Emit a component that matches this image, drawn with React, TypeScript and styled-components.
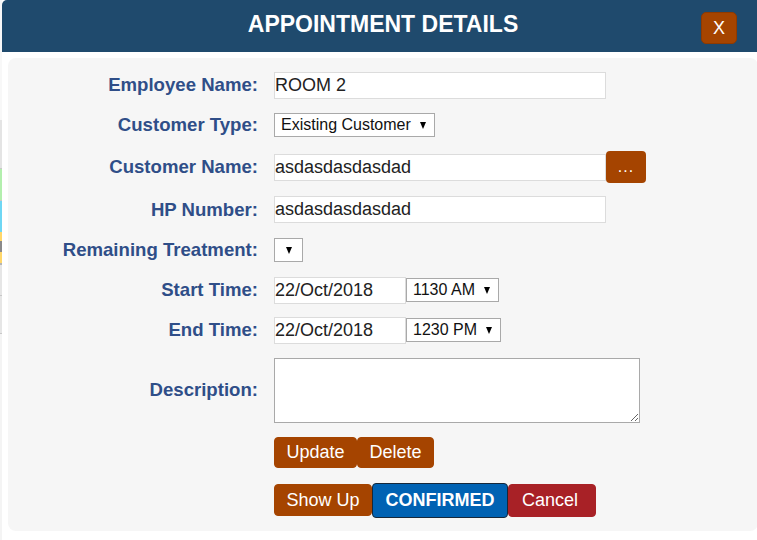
import styled, { createGlobalStyle } from "styled-components";

const GlobalStyle = createGlobalStyle`
  html, body {
    margin: 0;
    padding: 0;
    background: #ffffff;
  }
  body {
    font-family: "Liberation Sans", Arial, sans-serif;
  }
`;

const BROWN = "#a54400";
const BLUE = "#0062b3";
const RED = "#a82126";
const LABEL = "#2f4e88";

const Page = styled.div`
  width: 757px;
  height: 540px;
  display: flex;
  overflow: hidden;
  background: #ffffff;
`;

// the page behind the dialog, only a sliver of it shows on the left
const BackdropEdge = styled.div`
  width: 2px;
  flex: none;
  display: flex;
  flex-direction: column;
  background: #f4f4f4;
`;

const EdgeBand = styled.div<{ $color: string; $h: number }>`
  height: ${(p) => p.$h}px;
  background: ${(p) => p.$color};
  flex: none;
`;

const Modal = styled.div`
  width: 762px;
  flex: none;
  display: flex;
  flex-direction: column;
  background: #ffffff;
`;

const Header = styled.header`
  height: 52px;
  background: #1f4a6d;
  border-top-left-radius: 5px;
  display: grid;
  grid-template-columns: 1fr auto 1fr;
  align-items: center;
`;

const Title = styled.h1`
  grid-column: 2;
  margin: 0;
  color: #ffffff;
  font-size: 23px;
  font-weight: 700;
  line-height: 1;
  padding-bottom: 3px;
`;

const CloseButton = styled.button`
  grid-column: 3;
  justify-self: end;
  align-self: start;
  margin: 12px 27px 0 0;
  width: 36px;
  height: 32px;
  padding: 0;
  border: 1px solid #8f3a00;
  border-radius: 5px;
  background: ${BROWN};
  color: #ffffff;
  font-family: "Liberation Sans", Arial, sans-serif;
  font-size: 18px;
  line-height: 1;
`;

const Body = styled.div`
  margin: 6px 6px 0 6px;
  padding: 7px 0 5px;
  background: #f6f6f6;
  border-radius: 8px;
  display: flex;
  flex-direction: column;
`;

const Row = styled.div<{ $h: number }>`
  height: ${(p) => p.$h}px;
  display: grid;
  grid-template-columns: 250px 1fr;
  column-gap: 16px;
  align-items: center;
`;

const Label = styled.label`
  text-align: right;
  color: ${LABEL};
  font-size: 18.6px;
  font-weight: 700;
  white-space: nowrap;
`;

const Field = styled.div`
  display: flex;
  align-items: center;
`;

const TextInput = styled.input<{ $w: number }>`
  box-sizing: border-box;
  width: ${(p) => p.$w}px;
  height: 27px;
  margin: 0;
  padding: 0;
  border: 1px solid #dcdcdc;
  background: #ffffff;
  color: #222222;
  font-family: "Liberation Sans", Arial, sans-serif;
  font-size: 18px;
  outline: none;
`;

const SelectBox = styled.div<{ $empty?: boolean }>`
  box-sizing: border-box;
  height: 24px;
  display: inline-flex;
  align-items: center;
  gap: 9px;
  padding: ${(p) => (p.$empty ? "0 10px 0 11px" : "0 8px 0 6px")};
  border: 1px solid #a9a9a9;
  background: #ffffff;
  color: #111111;
  font-size: 16px;
  white-space: nowrap;
`;

const Caret = styled.span`
  width: 0;
  height: 0;
  border-left: 3.5px solid transparent;
  border-right: 3.5px solid transparent;
  border-top: 7px solid #000000;
  margin-top: 1px;
`;

const DotsButton = styled.button`
  width: 40px;
  height: 32px;
  padding: 0;
  border: none;
  border-radius: 4px;
  background: ${BROWN};
  color: #ffffff;
  font-family: "Liberation Sans", Arial, sans-serif;
  font-size: 16px;
  letter-spacing: 1px;
`;

const TextArea = styled.textarea`
  box-sizing: border-box;
  width: 366px;
  height: 65px;
  margin: 0;
  border: 1px solid #a9a9a9;
  background: #ffffff;
  font-family: "Liberation Sans", Arial, sans-serif;
  font-size: 16px;
  outline: none;
`;

const ButtonRow = styled.div`
  display: flex;
  align-items: center;
`;

const variants = {
  brown: { bg: BROWN, border: BROWN, weight: 400, pad: "0 11.5px" },
  blue: { bg: BLUE, border: "#16283a", weight: 700, pad: "0 12.5px" },
  red: { bg: RED, border: RED, weight: 400, pad: "0 17px 0 13px" },
};

const ActionButton = styled.button<{ $variant: keyof typeof variants; $h: number }>`
  height: ${(p) => p.$h}px;
  padding: ${(p) => variants[p.$variant].pad};
  margin: 0;
  border: 1px solid ${(p) => variants[p.$variant].border};
  border-radius: 4px;
  background: ${(p) => variants[p.$variant].bg};
  color: #ffffff;
  font-family: "Liberation Sans", Arial, sans-serif;
  font-size: 18px;
  font-weight: ${(p) => variants[p.$variant].weight};
  line-height: 1;
`;

const edgeBands = [
  { color: "#f8f8f8", h: 120 },
  { color: "#e4e4e4", h: 48 },
  { color: "#c8c8c8", h: 1 },
  { color: "#b3efae", h: 31 },
  { color: "#c8c8c8", h: 1 },
  { color: "#6fd7f4", h: 31 },
  { color: "#ffd76b", h: 9 },
  { color: "#8a8a8a", h: 11 },
  { color: "#ffd76b", h: 11 },
  { color: "#b5b5b5", h: 2 },
  { color: "#e6e6e6", h: 30 },
  { color: "#c8c8c8", h: 1 },
  { color: "#e6e6e6", h: 37 },
  { color: "#c8c8c8", h: 1 },
];

const App = () => {
  return (
    <>
      <GlobalStyle />
      <Page>
        <BackdropEdge>
          {edgeBands.map((b, i) => (
            <EdgeBand key={i} $color={b.color} $h={b.h} />
          ))}
        </BackdropEdge>
        <Modal>
          <Header>
            <Title>APPOINTMENT DETAILS</Title>
            <CloseButton>X</CloseButton>
          </Header>
          <Body>
            <Row $h={40}>
              <Label>Employee Name:</Label>
              <Field>
                <TextInput $w={332} readOnly value="ROOM 2" />
              </Field>
            </Row>
            <Row $h={40}>
              <Label>Customer Type:</Label>
              <Field>
                <SelectBox>
                  Existing Customer
                  <Caret />
                </SelectBox>
              </Field>
            </Row>
            <Row $h={44}>
              <Label>Customer Name:</Label>
              <Field>
                <TextInput $w={332} readOnly value="asdasdasdasdad" />
                <DotsButton>...</DotsButton>
              </Field>
            </Row>
            <Row $h={41}>
              <Label>HP Number:</Label>
              <Field>
                <TextInput $w={332} readOnly value="asdasdasdasdad" />
              </Field>
            </Row>
            <Row $h={40}>
              <Label>Remaining Treatment:</Label>
              <Field>
                <SelectBox $empty>
                  <Caret />
                </SelectBox>
              </Field>
            </Row>
            <Row $h={40}>
              <Label>Start Time:</Label>
              <Field>
                <TextInput $w={132} readOnly value="22/Oct/2018" />
                <SelectBox>
                  1130 AM
                  <Caret />
                </SelectBox>
              </Field>
            </Row>
            <Row $h={40}>
              <Label>End Time:</Label>
              <Field>
                <TextInput $w={132} readOnly value="22/Oct/2018" />
                <SelectBox>
                  1230 PM
                  <Caret />
                </SelectBox>
              </Field>
            </Row>
            <Row $h={80}>
              <Label>Description:</Label>
              <Field>
                <TextArea />
              </Field>
            </Row>
            <Row $h={44}>
              <span />
              <ButtonRow>
                <ActionButton $variant="brown" $h={31}>Update</ActionButton>
                <ActionButton $variant="brown" $h={31}>Delete</ActionButton>
              </ButtonRow>
            </Row>
            <Row $h={52}>
              <span />
              <ButtonRow>
                <ActionButton $variant="brown" $h={32}>Show Up</ActionButton>
                <ActionButton $variant="blue" $h={35}>CONFIRMED</ActionButton>
                <ActionButton $variant="red" $h={33}>Cancel</ActionButton>
              </ButtonRow>
            </Row>
          </Body>
        </Modal>
      </Page>
    </>
  );
};

export default App;
